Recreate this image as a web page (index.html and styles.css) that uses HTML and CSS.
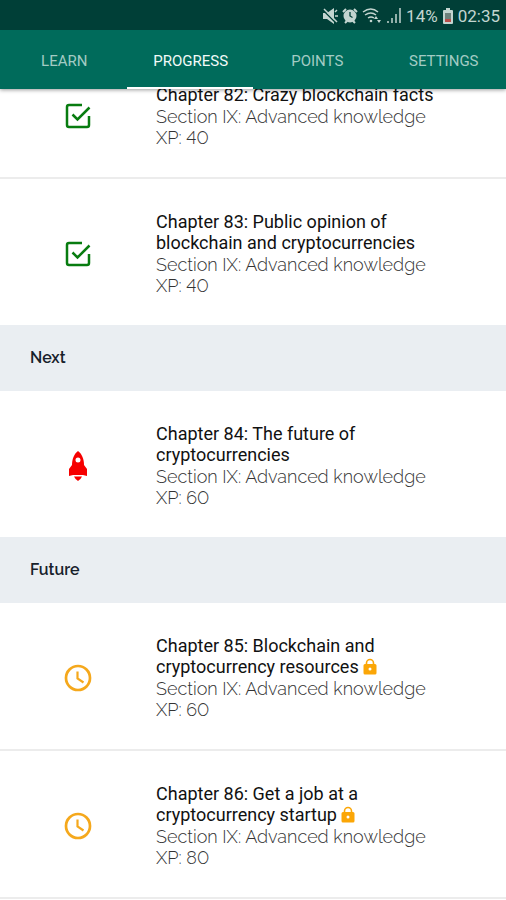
FILE: index.html
```html
<!DOCTYPE html>
<html lang="en">
<head>
<meta charset="utf-8">
<meta name="viewport" content="width=device-width, initial-scale=1">
<title>Progress</title>
<link rel="stylesheet" href="styles.css">
</head>
<body>
<svg class="defs" aria-hidden="true">
  <symbol id="check" viewBox="0 0 28 28"><path d="M18 3H5Q3 3 3 5V23Q3 25 5 25H23Q25 25 25 23V14M8.500 12.500L13.500 17.500L25.500 5.500" fill="none" stroke="currentColor" stroke-width="2.500"/></symbol>
  <symbol id="clock" viewBox="0 0 28 28"><circle cx="14" cy="14" r="12" fill="none" stroke="currentColor" stroke-width="2.700"/><path d="M13.500 7.500V14.500L19.500 18.500" fill="none" stroke="currentColor" stroke-width="2.200"/></symbol>
  <symbol id="rocket" viewBox="0 0 28 32"><path fill="currentColor" fill-rule="evenodd" d="M14 1C10 4 8 9 8 15L5 19V26L9 25H19L23 26V19L20 15C20 9 18 4 14 1ZM14 7.500A2.500 2.500 0 1 1 14 12.500A2.500 2.500 0 1 1 14 7.500Z"/><path fill="currentColor" d="M10 26.500H18Q17 29 14 31Q11 29 10 26.500Z"/></symbol>
  <symbol id="lock" viewBox="0 0 14 17"><path d="M3.500 7V5A3.500 3.500 0 0 1 10.500 5V7" fill="none" stroke="currentColor" stroke-width="1.600"/><path fill="currentColor" fill-rule="evenodd" d="M2 6H12Q13.500 6 13.500 7.500V15Q13.500 16.500 12 16.500H2Q.5 16.500 .5 15V7.500Q.5 6 2 6ZM7 9.500A1.500 1.500 0 1 0 7 12.500A1.500 1.500 0 1 0 7 9.500Z"/></symbol>
</svg>
<header class="top">
  <div class="status">
    <svg width="16" height="18" viewBox="0 0 16 18"><path fill="currentColor" d="M1 6H5L12 1V17L5 12H1Z"/><path d="M1 3L14 16" stroke="#003f37" stroke-width="1.500"/><path d="M2 2L15 15M13 5L15 3M13 9H16" stroke="currentColor" stroke-width="1.500"/></svg>
    <svg width="16" height="18" viewBox="0 0 16 18"><circle cx="8" cy="9" r="6.500" fill="currentColor"/><path d="M1 5L4 2M12 2L15 5M3 16L5 14M13 16L11 14" stroke="currentColor" stroke-width="2"/><path d="M8 5V9L10.500 10.500" fill="none" stroke="#003f37" stroke-width="1.300"/></svg>
    <svg width="20" height="18" viewBox="0 0 20 18"><path d="M1 5Q9 -1 16 5M3 8Q9 4 14 8M6 11Q9 9 12 11" fill="none" stroke="currentColor" stroke-width="1.500"/><circle cx="9" cy="14" r="1.300" fill="currentColor"/><path fill="currentColor" d="M12 12L14 9L16 12ZM15 13L17 16L19 13Z"/></svg>
    <svg width="16" height="18" viewBox="0 0 16 18"><path d="M2 14V16M6 11V16M10 7V16" stroke="currentColor" stroke-width="2" opacity=".75"/><path d="M14 1V16" stroke="currentColor" stroke-width="1.500"/></svg>
    <span>14%</span>
    <svg width="12" height="18" viewBox="0 0 12 18"><path fill="currentColor" d="M4 1H8V3H10Q11 3 11 4V16Q11 17 10 17H2Q1 17 1 16V4Q1 3 2 3H4Z"/><path fill="#6d817b" d="M3 6H9V12H3Z"/><path fill="#b84c48" d="M3 12H9V15H3Z"/></svg>
    <span>02:35</span>
  </div>
  <nav class="tabs">
    <a href="#learn">LEARN</a>
    <a href="#progress" class="active" aria-current="page">PROGRESS</a>
    <a href="#points">POINTS</a>
    <a href="#settings">SETTINGS</a>
  </nav>
</header>
<main class="list">
  <article class="item">
    <svg class="icon done"><use href="#check"/></svg>
    <div class="text"><h3>Chapter 82: Crazy blockchain facts</h3><p>Section IX: Advanced knowledge</p><p>XP: 40</p></div>
  </article>
  <article class="item">
    <svg class="icon done"><use href="#check"/></svg>
    <div class="text"><h3>Chapter 83: Public opinion of blockchain and cryptocurrencies</h3><p>Section IX: Advanced knowledge</p><p>XP: 40</p></div>
  </article>
  <h2 class="group">Next</h2>
  <article class="item">
    <svg class="icon next"><use href="#rocket"/></svg>
    <div class="text"><h3>Chapter 84: The future of cryptocurrencies</h3><p>Section IX: Advanced knowledge</p><p>XP: 60</p></div>
  </article>
  <h2 class="group">Future</h2>
  <article class="item">
    <svg class="icon future"><use href="#clock"/></svg>
    <div class="text"><h3>Chapter 85: Blockchain and cryptocurrency resources <svg class="lock"><use href="#lock"/></svg></h3><p>Section IX: Advanced knowledge</p><p>XP: 60</p></div>
  </article>
  <article class="item last">
    <svg class="icon future"><use href="#clock"/></svg>
    <div class="text"><h3>Chapter 86: Get a job at a cryptocurrency startup <svg class="lock"><use href="#lock"/></svg></h3><p>Section IX: Advanced knowledge</p><p>XP: 80</p></div>
  </article>
</main>
</body>
</html>
```
FILE: styles.css
```css
* { box-sizing: border-box; }
body { margin: 0; background: #fff; color: #111; font-family: Roboto, sans-serif; }
.defs { position: absolute; width: 0; height: 0; }
.top { position: sticky; top: 0; z-index: 1; background: #006b5b; box-shadow: 0 1px 4px rgba(0, 0, 0, .4); }
.status { display: flex; align-items: center; justify-content: flex-end; gap: 4px; height: 30px; padding: 2px 6px 0 0; background: #003f37; color: #c3d5d0; font-size: 17px; line-height: 20px; }
.tabs { display: grid; grid-template-columns: repeat(4, 1fr); height: 59px; }
.tabs a { display: flex; align-items: center; justify-content: center; padding: 4px 0 0 2px; border-bottom: 2px solid transparent; color: #a3cbc4; font-size: 15px; text-decoration: none; }
.tabs .active { color: #f2faf8; border-color: #fff; }
/* The list is scrolled so that its first row sits partly under the header. */
.list { margin-top: -37px; }
.item { display: grid; grid-template-columns: 156px 1fr; align-items: center; padding: 32px 66px 29px 0; }
.item + .item { border-top: 2px solid #ececec; }
.last { border-bottom: 2px solid #ececec; }
.icon { width: 28px; height: 28px; justify-self: center; }
.done { color: #087c10; }
.next { height: 32px; color: #f60000; }
.future { color: #f5a81c; }
.text h3 { margin: 0 0 1px; font-size: 18px; font-weight: 400; line-height: 21px; }
.text p { margin: 0; color: #333; font-family: Raleway, Inter, sans-serif; font-size: 18px; font-weight: 300; font-variant-numeric: lining-nums; line-height: 21px; }
.lock { width: 14px; height: 17px; color: #fba606; vertical-align: -2px; }
.group { margin: 0; padding: 22px 30px; background: #eaeef2; color: #17212b; font-family: Raleway, Inter, sans-serif; font-size: 16px; font-weight: 600; line-height: 22px; }
```
